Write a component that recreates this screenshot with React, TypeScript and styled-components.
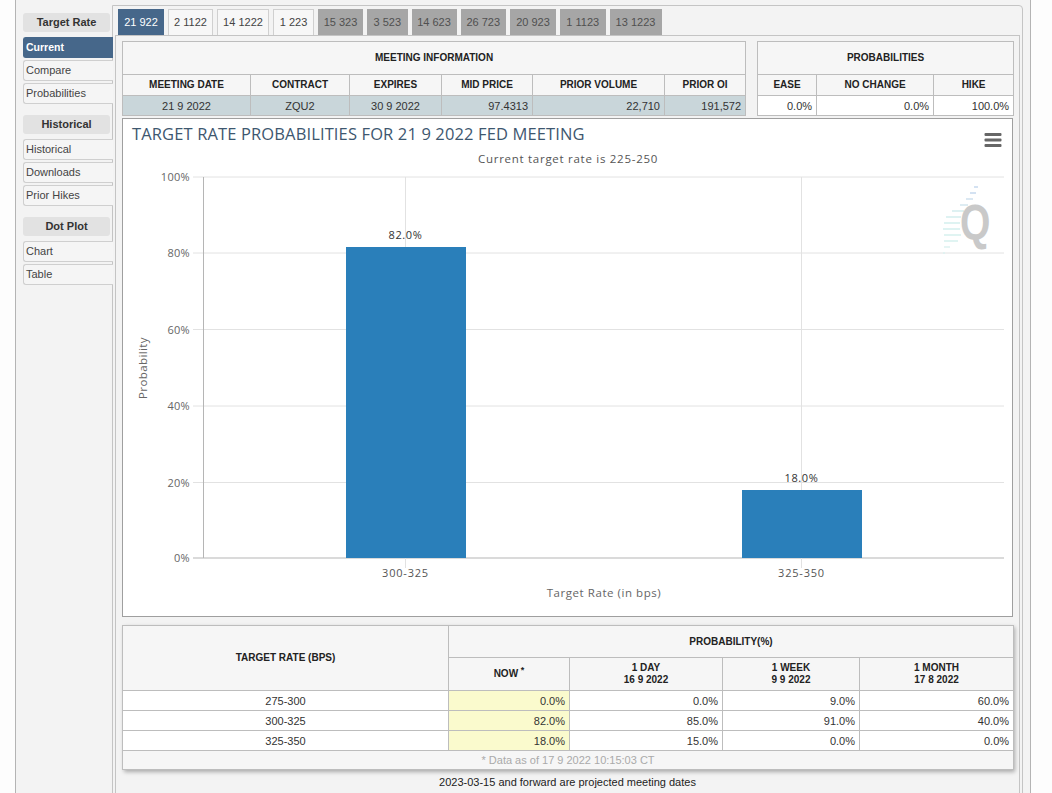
import styled, { createGlobalStyle } from "styled-components";

const GlobalStyle = createGlobalStyle`
  html, body {
    margin: 0;
    background: #fdfdfd;
    font-family: "Liberation Sans", Arial, sans-serif;
    overflow: hidden;
  }
`;

const Shell = styled.div`
  box-sizing: border-box;
  width: 1016px;
  height: 793px;
  margin-left: 15px;
  padding-left: 7px;
  border-left: 1px solid #b4b4b4;
  border-right: 1px solid #b4b4b4;
  background: #f3f3f3;
  display: flex;
  overflow: hidden;
`;

const Sidebar = styled.nav`
  flex: none;
  width: 89px;
  padding-top: 13px;
  position: relative;
  z-index: 1;
`;

const SideHeading = styled.div`
  width: 87px;
  height: 19px;
  margin-bottom: 5px;
  border-radius: 3px;
  background: #e2e2e2;
  color: #333;
  font-size: 11px;
  font-weight: 700;
  line-height: 19px;
  text-align: center;
`;

const SideGroup = styled.div`
  margin-bottom: 11px;
`;

const SideItem = styled.div<{ $active?: boolean }>`
  box-sizing: border-box;
  width: 90px;
  height: 21px;
  margin-bottom: 2px;
  padding-left: 2px;
  border: 1px solid ${(p) => (p.$active ? "#46678a" : "#cfcfcf")};
  border-right: none;
  border-radius: 3px 0 0 3px;
  background: ${(p) => (p.$active ? "#46678a" : "#f5f5f5")};
  color: ${(p) => (p.$active ? "#fff" : "#444")};
  font-size: ${(p) => (p.$active ? 10.5 : 11)}px;
  font-weight: ${(p) => (p.$active ? 700 : 400)};
  line-height: 19px;
`;

const Main = styled.main`
  box-sizing: border-box;
  flex: none;
  width: 911px;
  height: 900px;
  margin-top: 5px;
  padding: 3px 2px 0;
  border: 1px solid #c4c4c4;
  border-radius: 0 4px 0 0;
`;

const TabBar = styled.div`
  display: flex;
  gap: 4px;
  padding-left: 3px;
`;

const Tab = styled.div<{ $state: "active" | "open" | "closed"; $width: number }>`
  box-sizing: border-box;
  width: ${(p) => p.$width}px;
  height: 26px;
  border: 1px solid
    ${(p) => (p.$state === "open" ? "#d0d0d0" : "transparent")};
  border-bottom: none;
  background: ${(p) =>
    p.$state === "active"
      ? "#46678a"
      : p.$state === "open"
        ? "#f7f7f7"
        : "#a6a6a6"};
  color: ${(p) =>
    p.$state === "active" ? "#fff" : p.$state === "open" ? "#444" : "#505050"};
  font-size: 11px;
  line-height: 25px;
  text-align: center;
`;

const TabPanel = styled.section`
  box-sizing: border-box;
  height: 860px;
  padding: 5px 6px 0;
  border: 1px solid #c4c4c4;
  border-bottom: none;
`;

const TopRow = styled.div`
  display: flex;
  gap: 11px;
`;

const Table = styled.table<{ $width: number }>`
  box-sizing: border-box;
  width: ${(p) => p.$width}px;
  table-layout: fixed;
  border-collapse: collapse;
`;

const Col = styled.col<{ $width: number }>`
  width: ${(p) => p.$width}px;
`;

const HeadCell = styled.th<{ $height?: number }>`
  height: ${(p) => p.$height ?? 20}px;
  padding: 0;
  border: 1px solid #bdbdbd;
  background: #f6f6f6;
  color: #222;
  font-size: 10px;
  font-weight: 700;
  line-height: 12px;
  text-align: center;
`;

const Cell = styled.td<{
  $align?: "left" | "center" | "right";
  $bg?: string;
}>`
  height: 19px;
  padding: 0 4px;
  border: 1px solid #bdbdbd;
  background: ${(p) => p.$bg ?? "#fff"};
  color: #333;
  font-size: 11px;
  line-height: 12px;
  text-align: ${(p) => p.$align ?? "right"};
`;

const FootCell = styled.td`
  height: 18px;
  padding: 0;
  border: 1px solid #bdbdbd;
  background: #f6f6f6;
  color: #aaa;
  font-size: 11px;
  text-align: center;
`;

const ChartBox = styled.div`
  box-sizing: border-box;
  width: 891px;
  height: 499px;
  margin-top: 2px;
  border: 1px solid #9f9f9f;
  background: #fff;
`;

const ChartSvg = styled.svg`
  display: block;
  font-family: "Open Sans", sans-serif;
`;

const ForecastWrap = styled.div`
  width: 891px;
  margin-top: 8px;
  box-shadow: 2px 2px 4px rgba(0, 0, 0, 0.3);
`;

const Sup = styled.sup`
  font-size: 9px;
  line-height: 0;
`;

const Note = styled.p`
  width: 891px;
  margin: 6px 0 0;
  color: #222;
  font-size: 11px;
  text-align: center;
`;

const tabs = [
  { label: "21 922", w: 46, state: "active" },
  { label: "2 1122", w: 45, state: "open" },
  { label: "14 1222", w: 52, state: "open" },
  { label: "1 223", w: 41, state: "open" },
  { label: "15 323", w: 45, state: "closed" },
  { label: "3 523", w: 40.5, state: "closed" },
  { label: "14 623", w: 45, state: "closed" },
  { label: "26 723", w: 45.5, state: "closed" },
  { label: "20 923", w: 46, state: "closed" },
  { label: "1 1123", w: 45.5, state: "closed" },
  { label: "13 1223", w: 52, state: "closed" },
] as const;

const sideGroups = [
  { title: "Target Rate", items: ["Current", "Compare", "Probabilities"] },
  { title: "Historical", items: ["Historical", "Downloads", "Prior Hikes"] },
  { title: "Dot Plot", items: ["Chart", "Table"] },
];

const meetingCols = [128, 99, 92, 91, 132, 81];
const probCols = [59, 117, 80];
const forecastCols = [326, 121, 153, 137, 154];

const forecastRows = [
  ["275-300", "0.0%", "0.0%", "9.0%", "60.0%"],
  ["300-325", "82.0%", "85.0%", "91.0%", "40.0%"],
  ["325-350", "18.0%", "15.0%", "0.0%", "0.0%"],
];

const yTicks = [
  { label: "100%", y: 177 },
  { label: "80%", y: 253 },
  { label: "60%", y: 329.5 },
  { label: "40%", y: 406 },
  { label: "20%", y: 482.5 },
  { label: "0%", y: 558 },
];

const bars = [
  { label: "300-325", value: "82.0%", x: 346, top: 247, center: 405.5 },
  { label: "325-350", value: "18.0%", x: 742, top: 490, center: 801.5 },
];

// speed lines behind the Q of the logo: [x1, x2, y, colour]
const logoLines: [number, number, number, string][] = [
  [974, 978, 187, "#c6d8ee"],
  [970, 976, 193, "#c6d8ee"],
  [966, 973, 199, "#cfe0ee"],
  [960, 968, 205, "#d3e6ee"],
  [952, 964, 211, "#d3ecee"],
  [946, 961, 217, "#d3eeee"],
  [944, 960, 223, "#d3efee"],
  [943, 960, 229, "#d3efee"],
  [944, 961, 235, "#d6f0ee"],
  [944, 958, 241, "#d6f0ee"],
  [944, 950, 247, "#dcf2f0"],
  [943, 945, 253, "#dcf2f0"],
];

const TargetChart = () => (
  <ChartBox>
    <ChartSvg width={889} height={497} viewBox="123 119 889 497">
      <text x={132} y={140} fontSize={16.5} fill="#3e576f" letterSpacing={0.13}>
        TARGET RATE PROBABILITIES FOR 21 9 2022 FED MEETING
      </text>
      <text
        x={568}
        y={163}
        fontSize={11.5}
        fill="#555"
        textAnchor="middle"
        letterSpacing={0.72}
      >
        Current target rate is 225-250
      </text>

      {yTicks.map((t) => (
        <g key={t.label}>
          <line x1={193} x2={1004} y1={t.y} y2={t.y} stroke={t.y === 558 ? "#b5b5b5" : "#e2e2e2"} />
          <text x={190} y={t.y + 4} fontSize={11} fill="#666" textAnchor="end" letterSpacing={0.3}>
            {t.label}
          </text>
        </g>
      ))}
      <line x1={203.5} x2={203.5} y1={177} y2={558} stroke="#b5b5b5" />
      {bars.map((b) => (
        <line key={b.label} x1={b.center} x2={b.center} y1={177} y2={568} stroke="#e2e2e2" />
      ))}

      {bars.map((b) => (
        <g key={b.value}>
          <rect x={b.x} y={b.top} width={120} height={558 - b.top} fill="#2a7fba" />
          <text x={b.center} y={b.top - 8} fontSize={11} fill="#333" textAnchor="middle" letterSpacing={0.6}>
            {b.value}
          </text>
          <text x={b.center} y={577} fontSize={11} fill="#555" textAnchor="middle" letterSpacing={0.8}>
            {b.label}
          </text>
        </g>
      ))}

      <text x={604} y={597} fontSize={11.5} fill="#666" textAnchor="middle" letterSpacing={0.55}>
        Target Rate (in bps)
      </text>
      <text
        transform="translate(147 368) rotate(-90)"
        fontSize={11.5}
        fill="#666"
        textAnchor="middle"
        letterSpacing={0.4}
      >
        Probability
      </text>

      {logoLines.map(([x1, x2, y, colour]) => (
        <line key={y} x1={x1} x2={x2} y1={y} y2={y} stroke={colour} strokeWidth={1.5} />
      ))}
      <text
        transform="translate(960 240) scale(0.85 1.1)"
        fontSize={46}
        fontWeight={700}
        fill="#c9c9c9"
        fontFamily="Liberation Sans, sans-serif"
      >
        Q
      </text>

      <rect x={984.5} y={133} width={17} height={3} rx={1} fill="#666" />
      <rect x={984.5} y={138.5} width={17} height={3} rx={1} fill="#666" />
      <rect x={984.5} y={144} width={17} height={3} rx={1} fill="#666" />
    </ChartSvg>
  </ChartBox>
);

export default function App() {
  return (
    <>
      <GlobalStyle />
      <Shell>
        <Sidebar>
          {sideGroups.map((group) => (
            <SideGroup key={group.title}>
              <SideHeading>{group.title}</SideHeading>
              {group.items.map((item) => (
                <SideItem key={item} $active={item === "Current"}>
                  {item}
                </SideItem>
              ))}
            </SideGroup>
          ))}
        </Sidebar>

        <Main>
          <TabBar>
            {tabs.map((tab) => (
              <Tab key={tab.label} $state={tab.state} $width={tab.w}>
                {tab.label}
              </Tab>
            ))}
          </TabBar>

          <TabPanel>
            <TopRow>
              <Table $width={623}>
                <colgroup>
                  {meetingCols.map((w, i) => (
                    <Col key={i} $width={w} />
                  ))}
                </colgroup>
                <tbody>
                  <tr>
                    <HeadCell colSpan={6} $height={32}>
                      MEETING INFORMATION
                    </HeadCell>
                  </tr>
                  <tr>
                    <HeadCell>MEETING DATE</HeadCell>
                    <HeadCell>CONTRACT</HeadCell>
                    <HeadCell>EXPIRES</HeadCell>
                    <HeadCell>MID PRICE</HeadCell>
                    <HeadCell>PRIOR VOLUME</HeadCell>
                    <HeadCell>PRIOR OI</HeadCell>
                  </tr>
                  <tr>
                    <Cell $align="center" $bg="#c9d6da">21 9 2022</Cell>
                    <Cell $align="center" $bg="#c9d6da">ZQU2</Cell>
                    <Cell $align="center" $bg="#c9d6da">30 9 2022</Cell>
                    <Cell $bg="#c9d6da">97.4313</Cell>
                    <Cell $bg="#c9d6da">22,710</Cell>
                    <Cell $bg="#c9d6da">191,572</Cell>
                  </tr>
                </tbody>
              </Table>

              <Table $width={256}>
                <colgroup>
                  {probCols.map((w, i) => (
                    <Col key={i} $width={w} />
                  ))}
                </colgroup>
                <tbody>
                  <tr>
                    <HeadCell colSpan={3} $height={32}>
                      PROBABILITIES
                    </HeadCell>
                  </tr>
                  <tr>
                    <HeadCell>EASE</HeadCell>
                    <HeadCell>NO CHANGE</HeadCell>
                    <HeadCell>HIKE</HeadCell>
                  </tr>
                  <tr>
                    <Cell>0.0%</Cell>
                    <Cell>0.0%</Cell>
                    <Cell>100.0%</Cell>
                  </tr>
                </tbody>
              </Table>
            </TopRow>

            <TargetChart />

            <ForecastWrap>
              <Table $width={891}>
                <colgroup>
                  {forecastCols.map((w, i) => (
                    <Col key={i} $width={w} />
                  ))}
                </colgroup>
                <tbody>
                  <tr>
                    <HeadCell rowSpan={2}>TARGET RATE (BPS)</HeadCell>
                    <HeadCell colSpan={4} $height={31}>
                      PROBABILITY(%)
                    </HeadCell>
                  </tr>
                  <tr>
                    <HeadCell $height={32}>
                      NOW <Sup>*</Sup>
                    </HeadCell>
                    <HeadCell>
                      1 DAY
                      <br />
                      16 9 2022
                    </HeadCell>
                    <HeadCell>
                      1 WEEK
                      <br />
                      9 9 2022
                    </HeadCell>
                    <HeadCell>
                      1 MONTH
                      <br />
                      17 8 2022
                    </HeadCell>
                  </tr>
                  {forecastRows.map(([rate, now, day, week, month]) => (
                    <tr key={rate}>
                      <Cell $align="center">{rate}</Cell>
                      <Cell $bg="#fafacd">{now}</Cell>
                      <Cell>{day}</Cell>
                      <Cell>{week}</Cell>
                      <Cell>{month}</Cell>
                    </tr>
                  ))}
                  <tr>
                    <FootCell colSpan={5}>* Data as of 17 9 2022 10:15:03 CT</FootCell>
                  </tr>
                </tbody>
              </Table>
            </ForecastWrap>

            <Note>2023-03-15 and forward are projected meeting dates</Note>
          </TabPanel>
        </Main>
      </Shell>
    </>
  );
}
